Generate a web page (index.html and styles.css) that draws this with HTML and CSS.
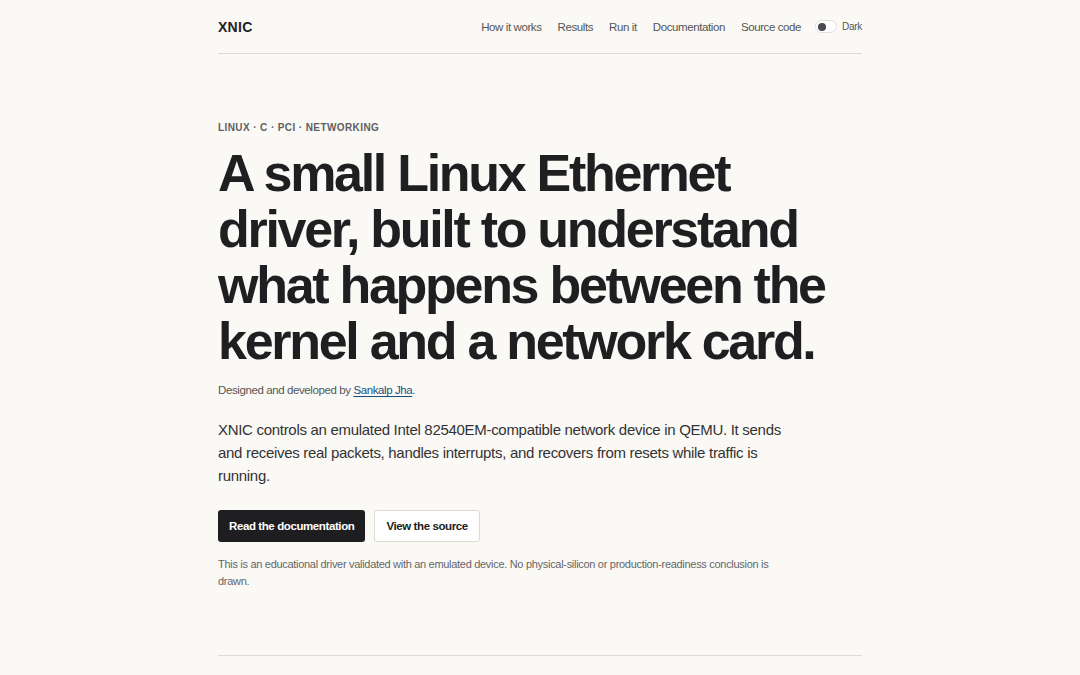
FILE: index.html
```html
<!DOCTYPE html>
<html lang="en">
<head>
    <meta charset="UTF-8">
    <meta name="viewport" content="width=device-width, initial-scale=1.0">
    <title>XNIC</title>
    <link rel="stylesheet" href="styles.css">
</head>
<body>
    <div class="wrap">
        <header class="site-header">
            <a class="brand" href="#">XNIC</a>
            <nav class="nav">
                <a href="#how">How it works</a>
                <a href="#results">Results</a>
                <a href="#run">Run it</a>
                <a href="#docs">Documentation</a>
                <a href="#source">Source code</a>
                <button class="theme-toggle" type="button">
                    <span class="switch"><span class="knob"></span></span>
                    <span class="toggle-label">Dark</span>
                </button>
            </nav>
        </header>

        <!-- Hero -->
        <section class="hero">
            <p class="eyebrow">Linux · C · PCI · Networking</p>
            <h1>A small Linux Ethernet driver, built to understand what happens between the kernel and a network card.</h1>
            <p class="byline">Designed and developed by <a href="#">Sankalp Jha</a>.</p>
            <p class="lead">XNIC controls an emulated Intel 82540EM-compatible network device in QEMU. It sends and receives real packets, handles interrupts, and recovers from resets while traffic is running.</p>
            <div class="actions">
                <a class="btn btn-dark" href="#docs">Read the documentation</a>
                <a class="btn btn-light" href="#source">View the source</a>
            </div>
            <p class="note">This is an educational driver validated with an emulated device. No physical-silicon or production-readiness conclusion is drawn.</p>
        </section>
    </div>
</body>
</html>
```

FILE: styles.css
```css
* {
    margin: 0;
    padding: 0;
    box-sizing: border-box;
}

body {
    font-family: 'Liberation Sans', Arial, sans-serif;
    background: #faf9f6;
    color: #1d1d1f;
}

a {
    color: inherit;
    text-decoration: none;
}

.wrap {
    width: 644px;
    margin: 0 auto;
}

/* Header */
.site-header {
    height: 54px;
    display: flex;
    align-items: center;
    justify-content: space-between;
    border-bottom: 1px solid #dcdad5;
}

.brand {
    font-size: 14px;
    font-weight: bold;
    letter-spacing: 0.02em;
    color: #222;
}

.nav {
    display: flex;
    align-items: center;
    gap: 16px;
}

.nav a {
    font-size: 11.5px;
    letter-spacing: -0.4px;
    color: #555;
}

.theme-toggle {
    display: flex;
    align-items: center;
    gap: 5px;
    background: none;
    border: none;
    font-family: inherit;
    cursor: pointer;
    margin-left: -2px;
}

.switch {
    width: 22px;
    height: 13px;
    border: 1px solid #e2e0db;
    border-radius: 7px;
    background: #fff;
    display: flex;
    align-items: center;
    padding-left: 2px;
}

.knob {
    width: 8px;
    height: 8px;
    border-radius: 50%;
    background: #4a4a50;
}

.toggle-label {
    font-size: 10px;
    letter-spacing: -0.3px;
    color: #555;
}

/* Hero */
.hero {
    padding: 67px 0 65px;
    border-bottom: 1px solid #dcdad5;
}

.eyebrow {
    font-size: 10px;
    font-weight: bold;
    text-transform: uppercase;
    letter-spacing: 0.04em;
    color: #5f5f62;
    line-height: 14px;
}

h1 {
    margin-top: 10px;
    font-size: 52px;
    line-height: 56px;
    letter-spacing: -0.044em;
    font-weight: bold;
    color: #1f1f22;
}

.byline {
    margin-top: 13px;
    font-size: 11.5px;
    letter-spacing: -0.4px;
    color: #555;
    line-height: 16px;
}

.byline a {
    color: #1d4f7c;
    text-decoration: underline;
    text-underline-offset: 2px;
}

.lead {
    margin-top: 20px;
    max-width: 580px;
    font-size: 15px;
    letter-spacing: -0.3px;
    line-height: 23px;
    color: #333;
}

.actions {
    margin-top: 23px;
    display: flex;
    gap: 9px;
}

.btn {
    display: inline-flex;
    align-items: center;
    height: 32px;
    padding: 0 11px;
    border-radius: 3px;
    font-size: 11.5px;
    letter-spacing: -0.4px;
    font-weight: bold;
}

.btn-dark {
    background: #1e1e21;
    color: #fff;
}

.btn-light {
    background: #fff;
    color: #1e1e21;
    border: 1px solid #dcdad5;
}

.note {
    margin-top: 14px;
    max-width: 560px;
    font-size: 11px;
    letter-spacing: -0.3px;
    line-height: 17px;
    color: #666;
}
```
